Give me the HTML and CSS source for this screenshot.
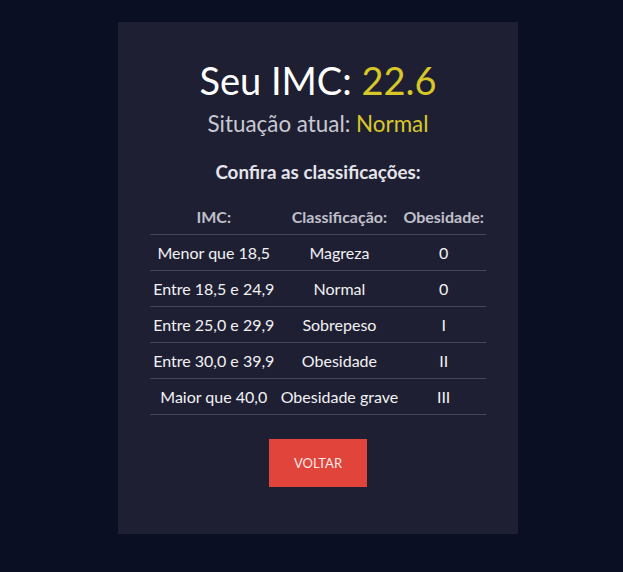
FILE: index.html
```html
<!DOCTYPE html>
<html lang="pt-BR">
<head>
<meta charset="utf-8">
<title>IMC</title>
<link rel="stylesheet" href="styles.css">
</head>
<body>
<main class="card">
  <h1 class="title">Seu IMC: <span class="value">22.6</span></h1>
  <p class="status">Situação atual: <span class="value">Normal</span></p>
  <h2 class="subtitle">Confira as classificações:</h2>
  <table class="table">
    <thead>
      <tr><th>IMC:</th><th>Classificação:</th><th>Obesidade:</th></tr>
    </thead>
    <tbody>
      <tr><td>Menor que 18,5</td><td>Magreza</td><td>0</td></tr>
      <tr><td>Entre 18,5 e 24,9</td><td>Normal</td><td>0</td></tr>
      <tr><td>Entre 25,0 e 29,9</td><td>Sobrepeso</td><td>I</td></tr>
      <tr><td>Entre 30,0 e 39,9</td><td>Obesidade</td><td>II</td></tr>
      <tr><td>Maior que 40,0</td><td>Obesidade grave</td><td>III</td></tr>
    </tbody>
  </table>
  <button class="btn" type="button">VOLTAR</button>
</main>
</body>
</html>
```
FILE: styles.css
```css
html, body {
  margin: 0;
  padding: 0;
}
body {
  background: #0a0f24;
  font-family: Lato, "Open Sans", sans-serif;
  color: #ffffff;
  min-height: 572px;
  padding-top: 22px;
  box-sizing: border-box;
}
.card {
  width: 400px;
  height: 512px;
  margin-left: 118px;
  background: #1f1f34;
  display: flex;
  flex-direction: column;
  align-items: center;
  box-sizing: border-box;
  padding-top: 34px;
}
.title {
  margin: 0;
  font-size: 38px;
  font-weight: 400;
  line-height: 48px;
  color: #ffffff;
}
.value {
  color: #d7c827;
}
.status {
  margin: 6px 0 0;
  font-size: 22.4px;
  line-height: 28px;
  color: #c9c9d2;
}
.subtitle {
  margin: 22px 0 0;
  font-size: 18.8px;
  font-weight: 700;
  line-height: 24px;
  color: #e4e4ea;
}
.table {
  margin-top: 15px;
  border-collapse: collapse;
  width: 336px;
  font-size: 16px;
}
.table th {
  font-weight: 700;
  color: #c0c0ca;
  height: 35px;
  padding: 0;
  border-bottom: 1px solid #45455a;
}
.table td {
  text-align: center;
  color: #f2f2f2;
  height: 35px;
  padding: 0;
  border-bottom: 1px solid #45455a;
}
.btn {
  margin-top: 24px;
  width: 98px;
  height: 48px;
  border: none;
  background: #e0443b;
  color: #fbe9e7;
  font-family: Lato, sans-serif;
  font-size: 13px;
}
```
